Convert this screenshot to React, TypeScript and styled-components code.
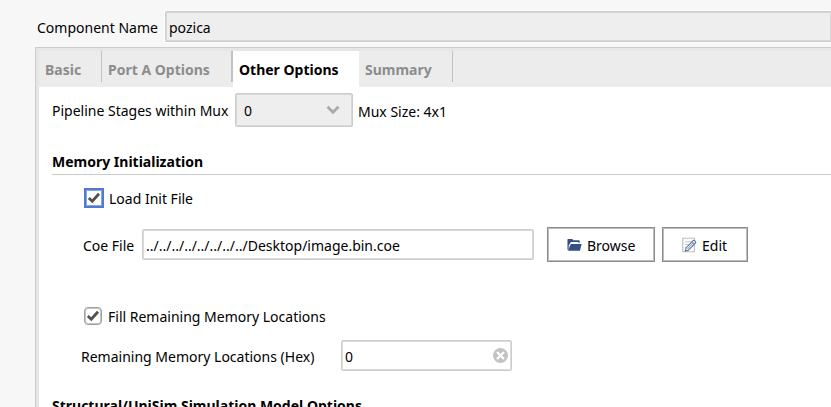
import React, { useState } from "react";
import styled, { createGlobalStyle } from "styled-components";

const GlobalStyle = createGlobalStyle`
  * { box-sizing: border-box; }
  html, body { margin: 0; background: #f7f7f7; }
  body { overflow: hidden; }
  body, input, button, select {
    font-family: "Noto Sans", "Open Sans", sans-serif;
    font-size: 14px;
    line-height: 20px;
    color: #000;
  }
`;

const Page = styled.main`
  display: flex;
  flex-direction: column;
  height: 100vh;
  padding-top: 11px;
`;

const NameRow = styled.div`
  display: flex;
  align-items: center;
  flex: none;
  padding-left: 37px;
  margin-bottom: 5px;
`;

const NameLabel = styled.label`
  width: 128px;
  padding-top: 2px;
  white-space: nowrap;
`;

const TextInput = styled.input<{ $muted?: boolean }>`
  flex: 1;
  min-width: 0;
  width: 100%;
  height: 31px;
  padding: 2px 3px 0;
  border: 1px solid #cccccc;
  border-radius: 2px;
  background: ${(p) => (p.$muted ? "#eeeeee" : "#ffffff")};
  box-shadow: inset 0 0 0 1px #dcdcdc;
  outline: none;
`;

const NameInput = styled(TextInput)`
  border-right: 0;
  border-radius: 2px 0 0 2px;
  box-shadow: 0 0 0 1px #ffffff, inset 0 0 0 1px #d8d8d8;
`;

const Panel = styled.section`
  flex: 1;
  min-height: 0;
  margin-left: 35px;
  border-top: 1px solid #cccccc;
  border-left: 1px solid #cccccc;
  background: #e6e6e6;
  padding: 3px 0 0 3px;
  display: flex;
  flex-direction: column;
`;

const TabBar = styled.div`
  display: flex;
  flex: none;
  height: 36px;
  background: #ececec;
`;

const Tab = styled.button<{ $width: number; $active?: boolean; $rule: number }>`
  display: flex;
  width: ${(p) => p.$width}px;
  height: 36px;
  padding: 0;
  border: 0;
  text-align: left;
  font-weight: 700;
  white-space: nowrap;
  color: ${(p) => (p.$active ? "#000000" : "#8c8c8c")};
  background: ${(p) => (p.$active ? "#ffffff" : "transparent")};

  span {
    flex: 1;
    height: 31px;
    padding: 9px 0 0 6px;
    border-right: ${(p) => p.$rule}px solid #c2c2c2;
  }
`;

const Content = styled.div`
  flex: 1;
  min-height: 0;
  overflow: hidden;
  padding: 6px 0 0 13px;
  background: #ffffff;
`;

const Row = styled.div<{ $indent?: number; $height: number; $top?: number }>`
  display: flex;
  align-items: center;
  height: ${(p) => p.$height}px;
  margin-top: ${(p) => p.$top ?? 0}px;
  padding-left: ${(p) => p.$indent ?? 0}px;
  white-space: nowrap;
`;

const FieldLabel = styled.label<{ $width: number }>`
  width: ${(p) => p.$width}px;
  flex: none;
  padding-top: 2px;
`;

const Note = styled.span`
  padding-top: 3px;
`;

const SelectBox = styled.div`
  display: grid;
  width: 118px;
  height: 34px;
  margin-right: 5px;
  align-items: center;

  select, svg { grid-area: 1 / 1; }
  svg { justify-self: end; margin-right: 13px; pointer-events: none; }
`;

const Select = styled.select`
  appearance: none;
  width: 100%;
  height: 100%;
  padding: 2px 8px 0;
  border: 1px solid #cccccc;
  border-radius: 2px;
  background: #eeeeee;
  box-shadow: inset 0 0 0 1px #d8d8d8;
`;

const Heading = styled.h2<{ $top: number }>`
  margin: ${(p) => p.$top}px 0 0;
  padding-bottom: 2px;
  border-bottom: 1px solid #cccccc;
  font-size: 14px;
  line-height: 20px;
`;

const CheckLabel = styled.label`
  display: flex;
  align-items: center;
  gap: 6px;
`;

const CheckText = styled.span`
  padding-top: 2px;
`;

const CheckBox = styled.span<{ $focused?: boolean }>`
  display: grid;
  place-items: center;
  width: 18px;
  height: 18px;
  outline: ${(p) => (p.$focused ? "1px solid #4d7bd0" : "none")};

  input, svg { grid-area: 1 / 1; }
  svg { pointer-events: none; }
  input {
    appearance: none;
    width: 18px;
    height: 18px;
    margin: 0;
    outline: none;
    border: ${(p) => (p.$focused ? "1px solid #4d7bd0" : "1px solid #a0a0a0")};
    border-radius: ${(p) => (p.$focused ? 0 : 4)}px;
    box-shadow: inset 0 0 0 1px ${(p) => (p.$focused ? "#8ba6d8" : "#c4c4c4")};
    background: #ffffff;
  }
`;

const PathBox = styled.div`
  display: flex;
  width: 392px;
  margin-right: 13px;
`;

const Button = styled.button<{ $width: number }>`
  display: flex;
  align-items: center;
  gap: 5px;
  width: ${(p) => p.$width}px;
  height: 35px;
  margin-right: 7px;
  padding: 0 0 0 19px;
  border: 1px solid #8c8c8c;
  box-shadow: inset 0 0 0 1px #bcbcbc;
  background: #ffffff;

  span { padding-top: 2px; }
`;

const ClearBox = styled.div`
  display: grid;
  width: 171px;
  align-items: center;

  > * { grid-area: 1 / 1; }
`;

const ClearButton = styled.button`
  display: flex;
  justify-self: end;
  margin-right: 4px;
  padding: 0;
  border: 0;
  background: none;
`;

function Check({ label, focused }: { label: string; focused?: boolean }) {
  const [on, setOn] = useState(true);
  return (
    <CheckLabel>
      <CheckBox $focused={focused}>
        <input type="checkbox" checked={on} onChange={() => setOn(!on)} />
        {on && (
          <svg width="14" height="12" viewBox="0 0 14 12" fill="none">
            <path d="M1.8 6 L5.3 9.3 L12 1.8" stroke="#505050" strokeWidth="2.8" />
          </svg>
        )}
      </CheckBox>
      <CheckText>{label}</CheckText>
    </CheckLabel>
  );
}

const FolderIcon = () => (
  <svg width="15" height="14" viewBox="0 0 16 14" fill="#344f88">
    <path d="M0.5 12V1.2Q0.5 0.5 1.2 0.5H5.5L7 2H12.8Q13.5 2 13.5 2.7V4.8H12.2V3.8H4.2L1.8 7.5V12Z" />
    <path d="M5 6H15.6L13.8 13H1.2L3.4 7Q3.8 6 5 6Z" />
  </svg>
);

const EditIcon = () => (
  <svg width="15" height="16" viewBox="0 0 16 16" fill="none">
    <path d="M0.8 0.8H13.2V15.2H0.8Z" stroke="#bdbdbd" strokeWidth="1.2" />
    <path d="M3 4.5H10M3 7.5H8M3 10.5H5" stroke="#c4c4c4" />
    <path d="M3.5 14.5L4.3 11.2L11.8 3.4Q12.7 2.7 13.7 3.6L14.4 4.3Q15.1 5.2 14.3 6.1L6.8 13.7Z" fill="#fff" stroke="#4f6f9f" strokeWidth="1.1" />
    <path d="M5.8 12.3L12.4 5.4M10.8 4.6L13.2 7" stroke="#4f6f9f" strokeWidth="0.9" />
  </svg>
);

const tabs = [
  { name: "Basic", width: 63, rule: 1 },
  { name: "Port A Options", width: 131, rule: 2 },
  { name: "Other Options", width: 126, rule: 0 },
  { name: "Summary", width: 94, rule: 1 },
];

export default function App() {
  const [active, setActive] = useState("Other Options");
  const [fill, setFill] = useState("0");
  return (
    <Page>
      <GlobalStyle />
      <NameRow>
        <NameLabel htmlFor="name">Component Name</NameLabel>
        <NameInput id="name" $muted readOnly value="pozica" />
      </NameRow>
      <Panel>
        <TabBar role="tablist">
          {tabs.map((t) => (
            <Tab
              key={t.name}
              role="tab"
              aria-selected={t.name === active}
              $width={t.width}
              $rule={t.rule}
              $active={t.name === active}
              onClick={() => setActive(t.name)}
            >
              <span>{t.name}</span>
            </Tab>
          ))}
        </TabBar>
        <Content>
          <Row $height={34}>
            <FieldLabel htmlFor="stages" $width={183}>Pipeline Stages within Mux</FieldLabel>
            <SelectBox>
              <Select id="stages" defaultValue="0">
                <option>0</option>
                <option>1</option>
              </Select>
              <svg width="14" height="10" viewBox="0 0 14 10" fill="none">
                <path d="M1.5 1.8L7 7.3L12.5 1.8" stroke="#aaaaaa" strokeWidth="2.8" />
              </svg>
            </SelectBox>
            <Note>Mux Size: 4x1</Note>
          </Row>
          <Heading $top={25}>Memory Initialization</Heading>
          <Row $height={20} $indent={33} $top={13}>
            <Check label="Load Init File" focused />
          </Row>
          <Row $height={35} $indent={31} $top={19}>
            <FieldLabel htmlFor="coe" $width={59}>Coe File</FieldLabel>
            <PathBox>
              <TextInput id="coe" defaultValue="../../../../../../../../Desktop/image.bin.coe" />
            </PathBox>
            <Button $width={108}><FolderIcon /><span>Browse</span></Button>
            <Button $width={86}><EditIcon /><span>Edit</span></Button>
          </Row>
          <Row $height={20} $indent={32} $top={44}>
            <Check label="Fill Remaining Memory Locations" />
          </Row>
          <Row $height={31} $indent={29} $top={14}>
            <FieldLabel htmlFor="hex" $width={260}>Remaining Memory Locations (Hex)</FieldLabel>
            <ClearBox>
              <TextInput id="hex" value={fill} onChange={(e) => setFill(e.target.value)} />
              <ClearButton aria-label="Clear" onClick={() => setFill("")}>
                <svg width="15" height="15" viewBox="0 0 15 15">
                  <circle cx="7.5" cy="7.5" r="7.5" fill="#c3c3c3" />
                  <path d="M4 4L11 11M11 4L4 11" stroke="#fff" strokeWidth="2.2" />
                </svg>
              </ClearButton>
            </ClearBox>
          </Row>
          <Heading $top={25}>Structural/UniSim Simulation Model Options</Heading>
        </Content>
      </Panel>
    </Page>
  );
}
